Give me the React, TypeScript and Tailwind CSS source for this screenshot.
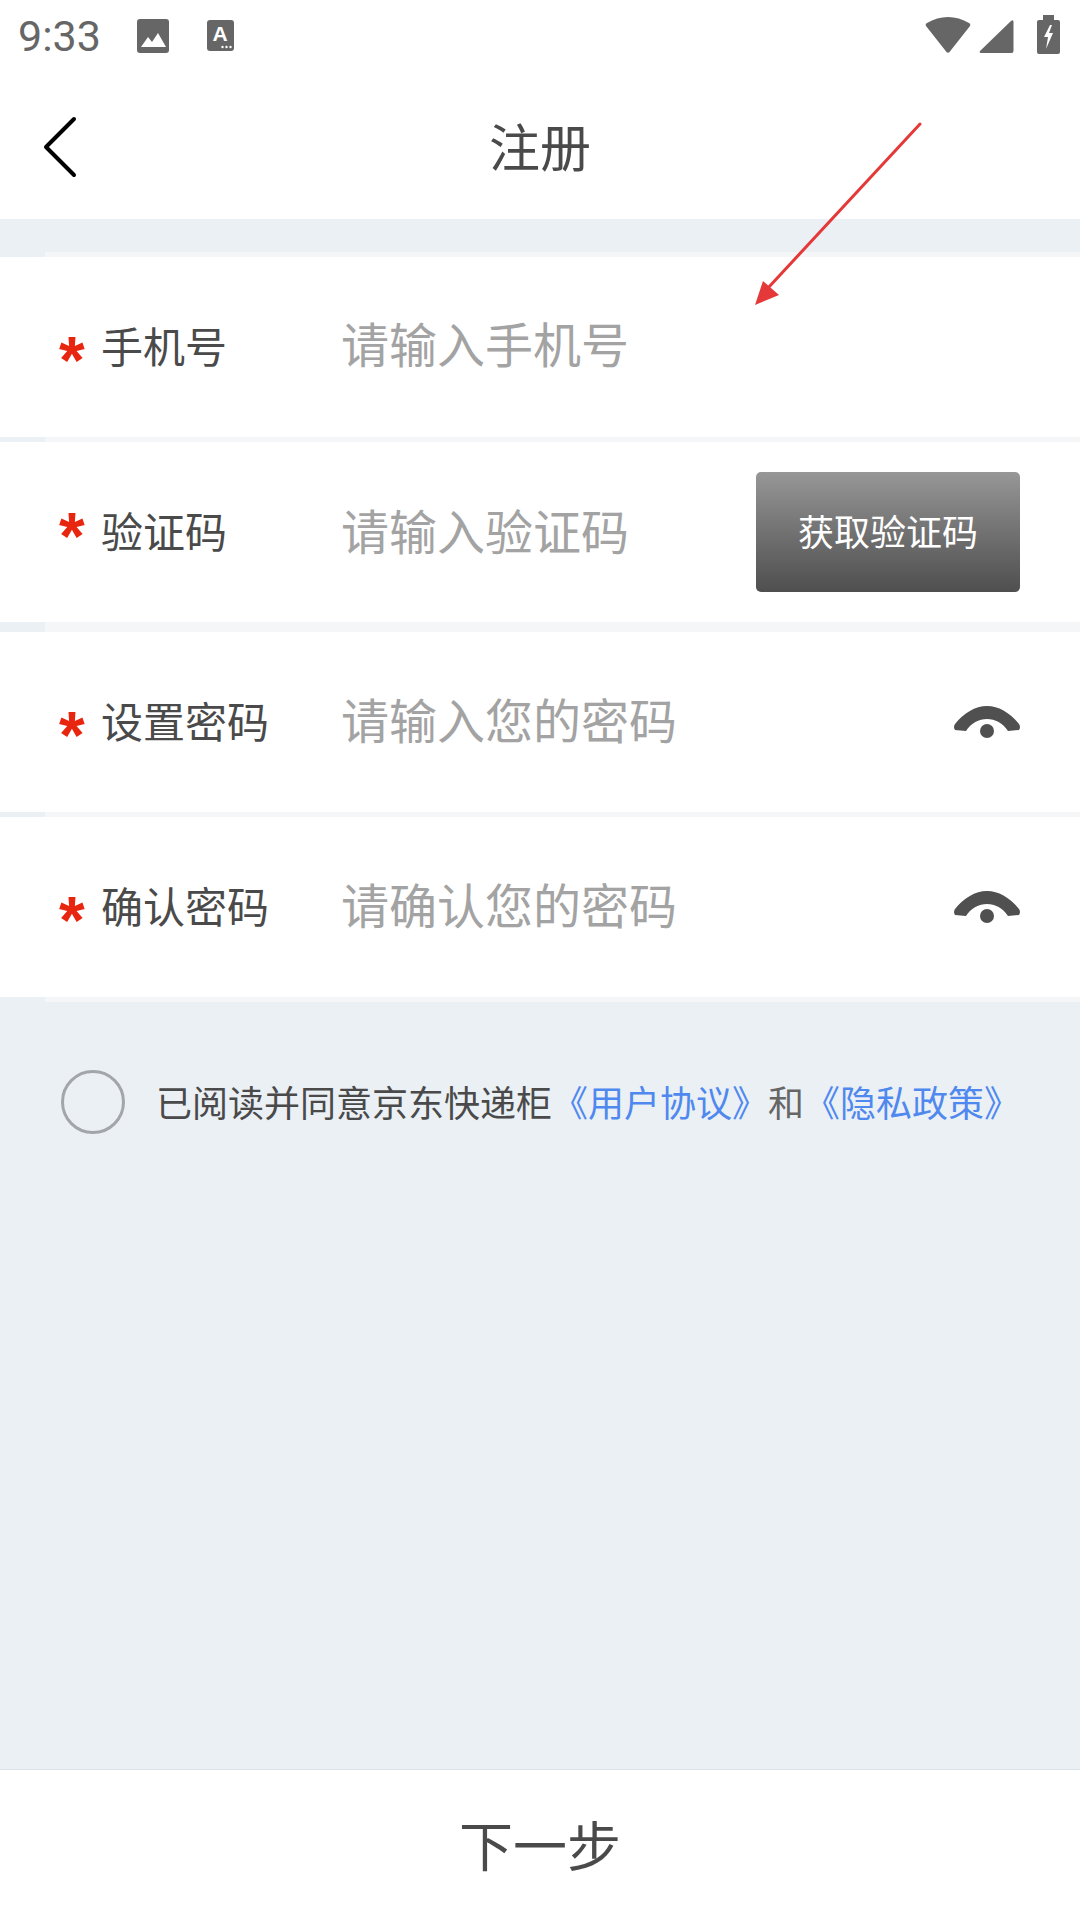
import React from 'react';

const CJK = "font-['Noto_Sans_CJK_SC','Noto_Sans',sans-serif]";

function StatusBar() {
  return (
    <div className="flex h-[78px] items-start justify-between bg-white pl-[18px] pr-[20px]">
      <div className="flex items-start">
        <span className="mt-[13px] font-['Roboto',sans-serif] text-[43px] leading-[46px] text-[#666666]">9:33</span>
        <svg className="ml-[36px] mt-[19px]" width="32" height="34" viewBox="0 0 32 34">
          <rect width="32" height="34" rx="3" fill="#666666" />
          <path d="M4 28 L11 18 L15 23 L21 14 L29 28 Z" fill="#ffffff" />
        </svg>
        <svg className="ml-[38px] mt-[20px]" width="27" height="31" viewBox="0 0 27 31">
          <rect width="27" height="31" rx="3" fill="#666666" />
          <text x="13" y="21" textAnchor="middle" fontFamily="Liberation Sans" fontWeight="700" fontSize="21" fill="#ffffff">A</text>
          <circle cx="15.5" cy="27" r="1.2" fill="#ffffff" />
          <circle cx="19.5" cy="27" r="1.2" fill="#ffffff" />
          <circle cx="23.5" cy="27" r="1.2" fill="#ffffff" />
        </svg>
      </div>
      <div className="flex items-start">
        <svg className="mt-[17px]" width="46" height="36" viewBox="0 0 46 36">
          <path d="M1 9 Q0 7 2 6 C15 -2 31 -2 44 6 Q46 7 45 9 L24.500 35 Q23 36.500 21.500 35 Z" fill="#666666" />
        </svg>
        <svg className="ml-[8px] mt-[20px]" width="35" height="33" viewBox="0 0 35 33">
          <path d="M32 1 Q34.500 -1 34.500 2 L34.500 31 Q34.500 33 32.500 33 L2 33 Q0 33 1 31 Z" fill="#666666" />
        </svg>
        <svg className="ml-[23px] mt-[15px]" width="23" height="39" viewBox="0 0 23 39">
          <path d="M6 0 H17 V5 H21 Q23 5 23 7 V37 Q23 39 21 39 H2 Q0 39 0 37 V7 Q0 5 2 5 H6 Z" fill="#666666" />
          <path d="M13 10 L7 22 H11 L9 34 L16 18 H12 L15 10 Z" fill="#ffffff" />
        </svg>
      </div>
    </div>
  );
}

function Divider({ h }: { h: string }) {
  return (
    <div className={`flex ${h}`}>
      <div className="w-[45px] bg-[#ebf0f5]" />
      <div className="flex-1 bg-[#f5f6f8]" />
    </div>
  );
}

function EyeIcon() {
  return (
    <svg width="66" height="33" viewBox="0 0 66 33">
      <path d="M1 18 C10 7 21 0 33 0 C45 0 56 7 65 18 Q67 21 65 24 L54 25 C49 17 41 13 33 13 C25 13 17 17 12 25 L1 24 Q-1 21 1 18 Z" fill="#505050" />
      <circle cx="33" cy="25" r="7" fill="#505050" />
    </svg>
  );
}

function FormRow({ label, placeholder, starClass, inputClass = 'pb-[9px]', right }: { label: string; placeholder: string; starClass: string; inputClass?: string; right?: React.ReactNode }) {
  return (
    <div className="flex h-[180px] items-center bg-white pl-[59px] pr-[60px]">
      <span className={`w-[42px] font-['Liberation_Sans',sans-serif] text-[66px] leading-none font-bold text-[#e8260f] ${starClass}`}>*</span>
      <span className="w-[240px] pb-[5px] text-[42px] leading-none text-[#4a4a4a]">{label}</span>
      <span className={`flex-1 text-[48px] leading-none text-[#a3a3a3] ${inputClass}`}>{placeholder}</span>
      {right}
    </div>
  );
}

export default function App() {
  return (
    <div className={`relative flex h-[1920px] w-[1080px] flex-col overflow-hidden bg-[#ebf0f5] ${CJK}`}>
      <StatusBar />
      <div className="relative flex h-[141px] items-center justify-center bg-white">
        <svg className="absolute left-[43px] top-[38px]" width="34" height="62" viewBox="0 0 34 62">
          <path d="M31 3 L3 31 L31 59" fill="none" stroke="#000000" strokeWidth="4" strokeLinecap="round" strokeLinejoin="round" />
        </svg>
        <span className="pb-[7px] text-[51px] leading-none text-[#4a4a4a]">注册</span>
      </div>
      <div className="h-[33px]" />
      <Divider h="h-[5px]" />
      <FormRow label="手机号" placeholder="请输入手机号" starClass="translate-y-[13px]" inputClass="pb-[11px]" />
      <Divider h="h-[5px]" />
      <FormRow
        label="验证码"
        placeholder="请输入验证码"
        starClass="translate-y-[4px]"
        inputClass="pb-[6px]"
        right={
          <button className="flex h-[120px] w-[264px] items-center justify-center rounded-[5px] bg-gradient-to-b from-[#979797] to-[#4f4f4f] pb-[5px] text-[36px] leading-none text-white">
            获取验证码
          </button>
        }
      />
      <Divider h="h-[10px]" />
      <FormRow label="设置密码" placeholder="请输入您的密码" starClass="translate-y-[13px]" right={<EyeIcon />} />
      <Divider h="h-[5px]" />
      <FormRow label="确认密码" placeholder="请确认您的密码" starClass="translate-y-[13px]" right={<EyeIcon />} />
      <Divider h="h-[5px]" />
      <div className="flex-1">
        <div className="flex items-center pl-[61px] pt-[68px]">
          <div className="h-[64px] w-[64px] rounded-full border-[3px] border-[#a3a6a9]" />
          <p className="ml-[31px] whitespace-nowrap pb-[2px] text-[36px] leading-none text-[#4a4a4a]">
            已阅读并同意京东快递柜
            <span className="text-[#4f88ee]">《用户协议》</span>
            <span className="text-[#666666]">和</span>
            <span className="text-[#4f88ee]">《隐私政策》</span>
          </p>
        </div>
      </div>
      <div className="flex h-[151px] items-center justify-center border-t-[1px] border-[#dde2e8] bg-white pb-[3px]">
        <span className="text-[54px] leading-none text-[#4a4a4a]">下一步</span>
      </div>
      {/* annotation arrow drawn over the screenshot */}
      <svg className="absolute left-[750px] top-[118px]" width="180" height="192" viewBox="0 0 180 192">
        <path d="M170 6 L18 170" stroke="#e53838" strokeWidth="3" strokeLinecap="round" />
        <path d="M5 187 L13 163 L29 177 Z" fill="#e53838" />
      </svg>
    </div>
  );
}
